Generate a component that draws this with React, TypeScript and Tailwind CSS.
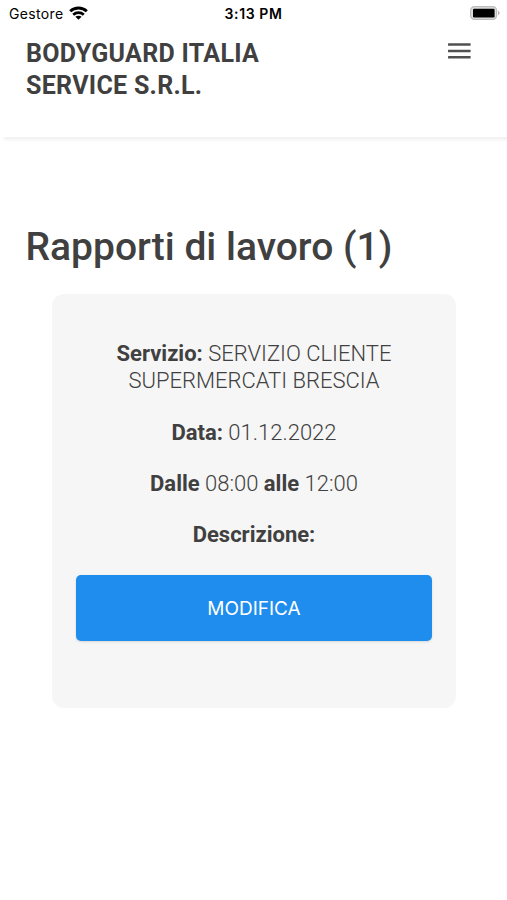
import React from "react";

const StatusBar: React.FC = () => (
  <div className="relative flex h-7 items-center justify-between pl-[9px] pr-[6px] font-['Inter',sans-serif] text-black">
    <div className="flex items-center gap-[5px]">
      <span className="mt-[-2px] text-[14px] tracking-[0.35px]">Gestore</span>
      <svg className="mt-[-3px]" width="19" height="14" viewBox="0 0 19 14" fill="none" stroke="black" strokeWidth="2.9">
        <path d="M1.2 5.3C5.8 0.9 13.2 0.9 17.8 5.3" />
        <path d="M4.2 8.7C7.1 5.9 11.9 5.9 14.8 8.7" strokeWidth="2.6" />
        <path d="M9.5 13.8L6.4 10.8C8 9.3 11 9.3 12.6 10.8Z" fill="black" stroke="none" />
      </svg>
    </div>
    <span className="absolute left-1/2 top-[4px] -translate-x-1/2 whitespace-nowrap text-[14px] font-semibold leading-5 tracking-[0.6px]">
      3:13 PM
    </span>
    <svg className="mt-[-2px]" width="31" height="14" viewBox="0 0 31 14">
      <rect x="0.6" y="0.6" width="26" height="12.8" rx="4" fill="#dedede" stroke="#bcbcbc" strokeWidth="1.2" />
      <rect x="3" y="2.8" width="21.6" height="8.6" rx="1.2" fill="black" />
      <path d="M28 4.8C30.2 5.6 30.2 8.4 28 9.2Z" fill="#b8b8b8" />
    </svg>
  </div>
);

const Header: React.FC = () => (
  <header className="flex h-[109px] items-start justify-between pl-[26px] pr-9 pt-[10px] shadow-[3px_4px_3px_-1px_rgba(0,0,0,0.06)]">
    <h2 className="text-[25px] font-bold leading-8 tracking-[0.3px]">
      BODYGUARD ITALIA
      <br />
      SERVICE S.R.L.
    </h2>
    <button aria-label="Menu" className="mt-[5px]">
      <svg width="23" height="16" viewBox="0 0 23 16" fill="#505050">
        <rect y="0.3" width="22.6" height="2.5" rx="0.4" />
        <rect y="6.7" width="22.6" height="2.5" rx="0.4" />
        <rect y="13.1" width="22.6" height="2.5" rx="0.4" />
      </svg>
    </button>
  </header>
);

export default function App() {
  return (
    <div className="min-h-screen bg-white font-['Roboto',sans-serif] text-[#404040]">
      <StatusBar />
      <Header />
      <main className="pt-[86px]">
        <h1 className="pl-[25.5px] text-[39px] font-medium leading-[48px]">Rapporti di lavoro (1)</h1>
        <section className="ml-[52px] mr-[51px] mt-[23px] h-[414px] rounded-xl bg-[#f6f6f6] px-6 pt-[46px] text-center text-[22px] font-light leading-[27px]">
          <p>
            <b className="font-bold">Servizio:</b> SERVIZIO CLIENTE
            <br />
            SUPERMERCATI BRESCIA
          </p>
          <p className="mt-[24.5px]">
            <b className="font-bold">Data:</b> 01.12.2022
          </p>
          <p className="mt-[24.5px]">
            <b className="font-bold">Dalle</b> 08:00 <b className="font-bold">alle</b> 12:00
          </p>
          <p className="mt-6">
            <b className="font-bold">Descrizione:</b>
          </p>
          <button className="mt-[27px] h-[66px] w-full rounded-[5px] bg-[#1e8dee] font-['Inter',sans-serif] text-[19px] font-normal text-white shadow-sm">
            MODIFICA
          </button>
        </section>
      </main>
    </div>
  );
}
